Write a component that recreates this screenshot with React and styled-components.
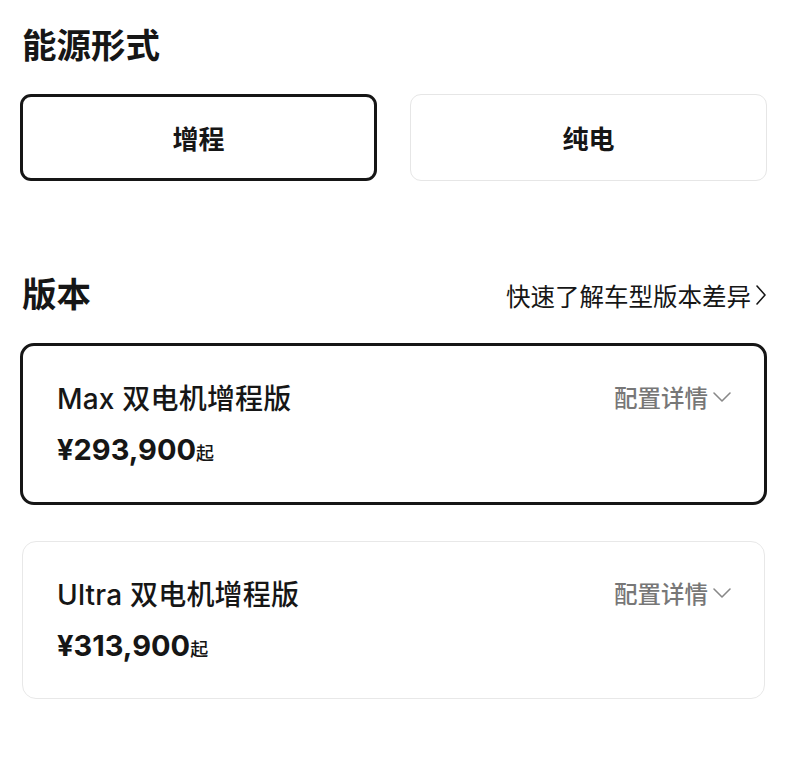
import styled, { createGlobalStyle } from 'styled-components';

const GlobalStyle = createGlobalStyle`
    body {
        margin: 0;
        background: #fff;
        font-family: Inter, "Noto Sans CJK SC", sans-serif;
        color: #161616;
    }
`

const Page = styled.div`
    width: 808px;
    padding: 26px 41px 0 20px;
    box-sizing: border-box;
    display: flex;
    flex-direction: column;
`

const SectionTitle = styled.h2`
    margin: 0;
    font-size: 34.5px;
    line-height: 40px;
    font-weight: 700;
    padding-left: 2px;
`

const Options = styled.div`
    display: grid;
    grid-template-columns: 357px 357px;
    column-gap: 33px;
    margin-top: 28px;
`

const Option = styled.div`
    height: 87px;
    box-sizing: border-box;
    border: ${p => p.$active ? '3px solid #161616' : '1.5px solid #e6e6e6'};
    border-radius: 11px;
    display: flex;
    align-items: center;
    justify-content: center;
    font-size: 26px;
    font-weight: 600;
`

const HeaderRow = styled.div`
    display: flex;
    align-items: center;
    justify-content: space-between;
    margin-top: 94px;
    height: 40px;
`

const Link = styled.div`
    display: flex;
    align-items: center;
    gap: 4px;
    font-size: 24.5px;
    font-weight: 400;
    color: #161616;
`

const Cards = styled.div`
    display: flex;
    flex-direction: column;
    gap: 36px;
    margin-top: 28px;
`

const Card = styled.div`
    margin: ${p => p.$active ? '0' : '0 2px'};
    height: ${p => p.$active ? 162 : 158}px;
    box-sizing: border-box;
    border: ${p => p.$active ? '3px solid #161616' : '1.5px solid #e8e8e8'};
    border-radius: 14px;
    padding: 0 32px 0 34px;
    display: flex;
    flex-direction: column;
    justify-content: center;
    gap: 16px;
`

const CardTop = styled.div`
    display: flex;
    align-items: center;
    justify-content: space-between;
    height: 36px;
`

const Name = styled.div`
    font-size: 28px;
    font-weight: 500;
    letter-spacing: 0.2px;
    margin-top: -3px;
`

const Details = styled.div`
    display: flex;
    align-items: center;
    gap: 4px;
    font-size: 23.5px;
    color: #777;
    font-weight: 500;
    margin-top: -3px;
`

const Price = styled.div`
    display: flex;
    align-items: baseline;
    height: 36px;
    font-size: 29px;
    font-weight: 700;
    line-height: 36px;
`

const From = styled.span`
    font-size: 18px;
    font-weight: 500;
`

const ChevronRight = () => (
    <svg width="12" height="22" viewBox="0 0 12 22" fill="none">
        <path d="M2 2l8 9-8 9" stroke="#161616" strokeWidth="1.6" strokeLinecap="round" strokeLinejoin="round" />
    </svg>
)

const ChevronDown = () => (
    <svg width="20" height="12" viewBox="0 0 20 12" fill="none">
        <path d="M2 2l8 8 8-8" stroke="#888" strokeWidth="1.6" strokeLinecap="round" strokeLinejoin="round" />
    </svg>
)

const versions = [
    { name: 'Max 双电机增程版', price: '¥293,900', active: true },
    { name: 'Ultra 双电机增程版', price: '¥313,900', active: false },
]

const App = () => {
    return (
        <Page>
            <GlobalStyle />
            <SectionTitle>能源形式</SectionTitle>
            <Options>
                <Option $active>增程</Option>
                <Option>纯电</Option>
            </Options>
            <HeaderRow>
                <SectionTitle>版本</SectionTitle>
                <Link>快速了解车型版本差异<ChevronRight /></Link>
            </HeaderRow>
            <Cards>
                {versions.map(v => (
                    <Card key={v.name} $active={v.active}>
                        <CardTop>
                            <Name>{v.name}</Name>
                            <Details>配置详情<ChevronDown /></Details>
                        </CardTop>
                        <Price>{v.price}<From>起</From></Price>
                    </Card>
                ))}
            </Cards>
        </Page>
    )
}

export default App;
